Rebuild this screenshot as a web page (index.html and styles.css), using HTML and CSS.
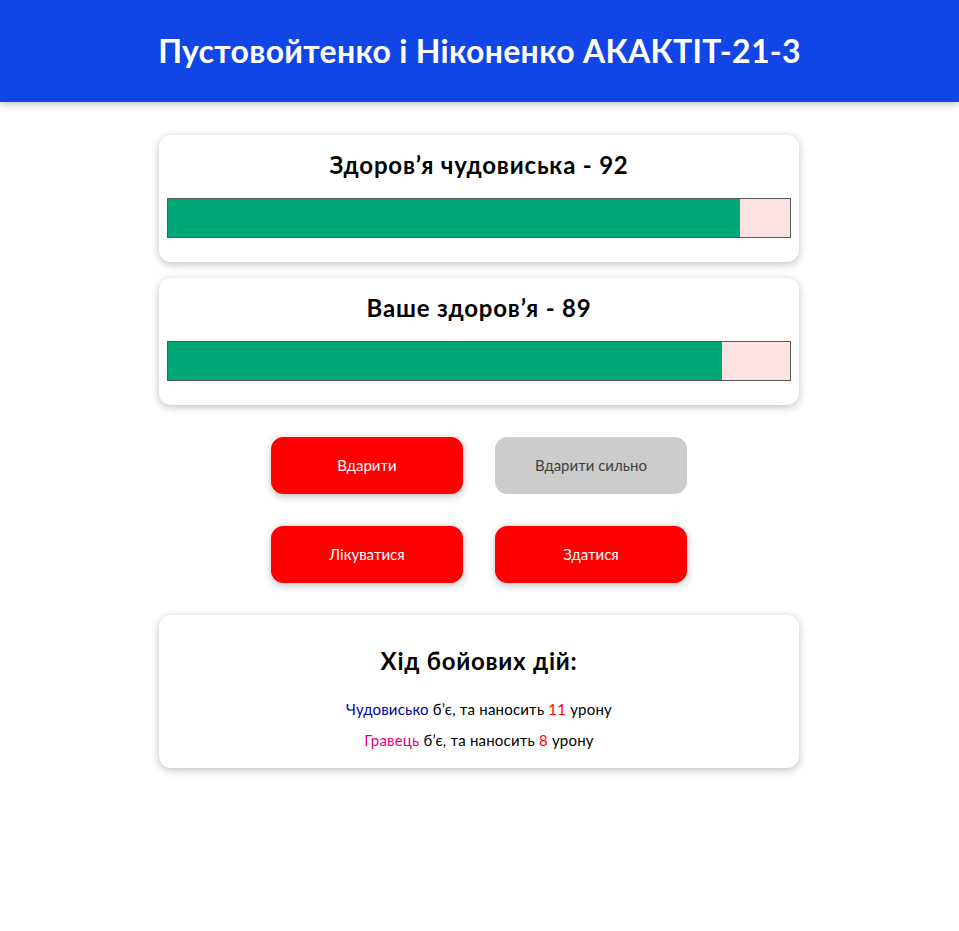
FILE: index.html
```html
<!DOCTYPE html>
<html lang="uk">
<head>
<meta charset="utf-8">
<title>Monster Slayer</title>
<link rel="stylesheet" href="styles.css">
</head>
<body>
<header class="header">
  <h1 class="header__title">Пустовойтенко і Ніконенко АКАКТІТ-21-3</h1>
</header>
<div class="game">
  <section class="container">
    <h2 class="container__title">Здоров’я чудовиська - 92</h2>
    <div class="healthbar"><div class="healthbar__value" style="width: 92%"></div></div>
  </section>
  <section class="container">
    <h2 class="container__title">Ваше здоров’я - 89</h2>
    <div class="healthbar"><div class="healthbar__value" style="width: 89%"></div></div>
  </section>
  <section class="controls">
    <button class="btn">Вдарити</button>
    <button class="btn" disabled>Вдарити сильно</button>
    <button class="btn">Лікуватися</button>
    <button class="btn">Здатися</button>
  </section>
  <section class="container log">
    <h2 class="log__title">Хід бойових дій:</h2>
    <ul class="log__list">
      <li class="log__item"><span class="log--monster">Чудовисько</span> б’є, та наносить <span class="log--damage">11</span> урону</li>
      <li class="log__item"><span class="log--player">Гравець</span> б’є, та наносить <span class="log--damage">8</span> урону</li>
    </ul>
  </section>
</div>
</body>
</html>
```
FILE: styles.css
```css
* { box-sizing: border-box; }
html { font-family: "Lato", "Noto Sans", sans-serif; }
body { margin: 0; background: #fff; color: #000; }

.header {
  background-color: #1245e6;
  color: #fff;
  text-align: center;
  padding: 28px 8px;
  box-shadow: 0 2px 8px rgba(0, 0, 0, 0.26);
  margin-bottom: 33px;
}
.header__title {
  margin: 0;
  font-size: 32px;
  line-height: 46px;
  font-weight: 700;
  letter-spacing: 0.3px;
}

.game { display: block; padding-right: 1px; }

.container {
  width: 640px;
  text-align: center;
  padding: 8px;
  margin: 0 auto 16px;
  box-shadow: 0 2px 8px rgba(0, 0, 0, 0.26);
  border-radius: 12px;
  background: #fff;
}
.container__title {
  margin: 4px;
  font-size: 24px;
  line-height: 35px;
  font-weight: 700;
  letter-spacing: 0.8px;
}
.healthbar {
  height: 40px;
  border: 1px solid #575757;
  margin: 16px 0;
  background: #fde2e2;
}
.healthbar__value { background-color: #00a876; height: 100%; }

.controls {
  width: 640px;
  display: flex;
  flex-wrap: wrap;
  justify-content: center;
  margin: 0 auto 16px;
}
.btn {
  font: inherit;
  font-size: 15px;
  line-height: 23px;
  border: 1px solid #ff0000;
  background-color: #ff0000;
  color: #fff;
  padding: 16px 8px;
  border-radius: 12px;
  margin: 16px;
  width: 192px;
  height: 57px;
  box-shadow: 0 2px 8px rgba(0, 0, 0, 0.26);
}
.btn:disabled {
  background-color: #ccc;
  border-color: #ccc;
  box-shadow: none;
  color: #3f3f3f;
}

.log { padding: 8px; }
.log__title {
  margin: 20px 0;
  font-size: 24px;
  line-height: 35px;
  font-weight: 700;
  letter-spacing: 0.75px;
}
.log__list { list-style: none; margin: 0; padding: 0; }
.log__item { margin: 8px 0; font-size: 15px; line-height: 23px; letter-spacing: 0.2px; }
.log__item:first-child { margin-top: 0; }
.log--monster { color: #0000a8; }
.log--player { color: #e6007e; }
.log--damage { color: #ff0000; }
```
